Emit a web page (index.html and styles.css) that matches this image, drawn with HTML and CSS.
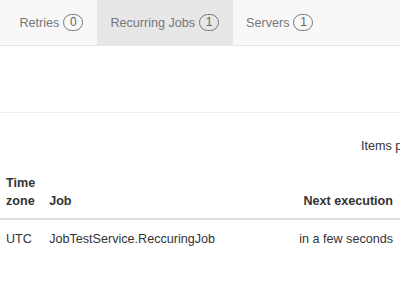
FILE: index.html
```html
<!DOCTYPE html>
<html lang="en">
<head>
    <meta charset="UTF-8">
    <meta name="viewport" content="width=device-width, initial-scale=1.0">
    <title>Recurring Jobs</title>
    <link rel="stylesheet" href="styles.css">
</head>
<body>
    <nav class="hf_nav">
        <a href="#" class="hf_nav_tab">Retries <span class="hf_badge">0</span></a>
        <a href="#" class="hf_nav_tab hf_nav_tab_active">Recurring Jobs <span class="hf_badge">1</span></a>
        <a href="#" class="hf_nav_tab">Servers <span class="hf_badge">1</span></a>
    </nav>

    <div class="hf_page_header"></div>

    <div class="hf_toolbar">
        <span class="hf_toolbar_label">Items per page:</span>
    </div>

    <table class="hf_table">
        <thead>
            <tr>
                <th class="hf_col_tz">Time zone</th>
                <th>Job</th>
                <th class="hf_col_next">Next execution</th>
            </tr>
        </thead>
        <tbody>
            <tr>
                <td class="hf_col_tz">UTC</td>
                <td>JobTestService.ReccuringJob</td>
                <td class="hf_col_next">in a few seconds</td>
            </tr>
        </tbody>
    </table>
</body>
</html>
```

FILE: styles.css
```css
* {
    box-sizing: border-box;
}

html, body {
    overflow: hidden;
}

body {
    margin: 0;
    font-family: "Liberation Sans", Arial, sans-serif;
    font-size: 12.6px;
    line-height: 18px;
    color: #333;
    background: white;
}

.hf_nav {
    display: flex;
    height: 46px;
    padding-left: 6px;
    background: #f8f8f8;
    border-bottom: 1px solid #e7e7e7;
}

.hf_nav_tab {
    display: flex;
    align-items: center;
    gap: 4px;
    padding: 0 13.5px;
    color: #777;
    text-decoration: none;
}

.hf_nav_tab_active {
    background: #e7e7e7;
}

.hf_badge {
    display: inline-block;
    min-width: 20px;
    height: 17px;
    padding: 0 5px;
    border: 1px solid #777;
    border-radius: 9px;
    font-size: 12px;
    line-height: 15px;
    text-align: center;
    color: #666;
}

.hf_page_header {
    height: 67px;
    border-bottom: 1px solid #eee;
}

.hf_toolbar {
    display: flex;
    margin-top: 24px;
    padding-left: 361px;
    white-space: nowrap;
}

.hf_table {
    width: 100%;
    margin-top: 12px;
    border-collapse: collapse;
}

.hf_table th {
    text-align: left;
    vertical-align: bottom;
    padding: 7px 7px 8px;
    border-bottom: 2px solid #ddd;
    font-weight: bold;
}

.hf_table td {
    padding: 10px 7px 7px;
}

.hf_table .hf_col_tz {
    width: 1%;
    padding-left: 6px;
}

.hf_table .hf_col_next {
    width: 1%;
    text-align: right;
    white-space: nowrap;
}
```
